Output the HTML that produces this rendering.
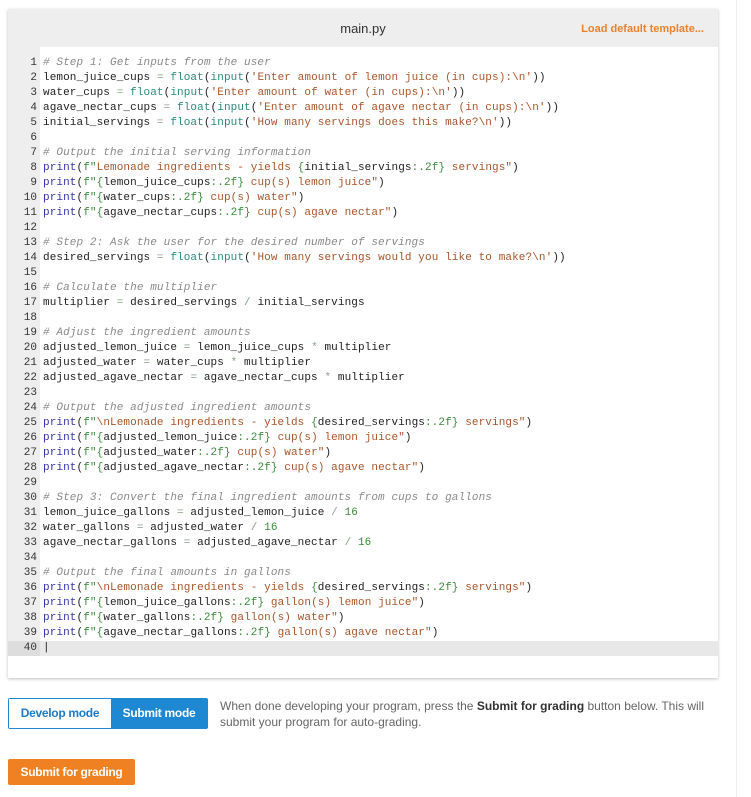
<!DOCTYPE html>
<html><head><meta charset="utf-8"><style>
body{margin:0;width:751px;height:797px;background:#fff;font-family:"Liberation Sans",sans-serif;position:relative;overflow:hidden}
.vline{position:absolute;left:736px;top:0;width:1px;height:797px;background:#eee}
.box{position:absolute;left:8px;top:9px;width:710px;height:669px;box-shadow:0 1px 3px rgba(0,0,0,.25);background:#fff}
.hdr{height:38px;background:#eeeeee;position:relative}
.hdr .t{position:absolute;left:0;right:0;text-align:center;top:12px;font-size:13px;color:#333}
.hdr .l{position:absolute;right:14px;top:14px;font-size:11px;font-weight:bold;color:#e8822f}
.gut{position:absolute;left:0;top:38px;width:32px;height:595px;background:#eeeeee}
.code{position:absolute;left:0;top:47px;width:710px;font-family:"Liberation Mono",monospace;font-size:11px;letter-spacing:0.1px;line-height:15px;color:#222}
.ln{display:block;height:15px;white-space:pre}
.n{display:inline-block;width:29px;padding-right:3px;text-align:right;color:#333;margin-right:3px;letter-spacing:0}
.cur{background:#e8e8e8}
.c{color:#8a8a8a;font-style:italic}.p{color:#3535a8}.b{color:#2b8a7e}.s{color:#a8562b}.g{color:#3d8a3d}.o{color:#8aa08a}
.btns{position:absolute;left:8px;top:698px;height:29px;border:1px solid #1e88d2;border-radius:2px;display:flex;font-size:12px;font-weight:bold;letter-spacing:-0.3px}
.btns div{line-height:29px;text-align:center}
.d{color:#1e7ac4;background:#fff;width:102px}.sm{color:#fff;background:#1e88d2;width:96px}
.desc{position:absolute;left:220px;top:698px;font-size:12px;line-height:16px;color:#666;width:490px}
.desc b{color:#333}
.sub{position:absolute;left:8px;top:759px;width:127px;height:26px;background:#ef8122;color:#fff;font-size:12px;font-weight:bold;text-align:center;line-height:26px;border-radius:2px;letter-spacing:-0.3px}
</style></head><body>
<div class="vline"></div>
<div class="box">
<div class="hdr"><div class="t">main.py</div><div class="l">Load default template...</div></div>
<div class="gut"></div>
<div class="code">
<span class="ln"><span class="n">1</span><span class="c"># Step 1: Get inputs from the user</span></span>
<span class="ln"><span class="n">2</span>lemon_juice_cups <span class="o">=</span> <span class="b">float</span>(<span class="b">input</span>(<span class="s">'Enter amount of lemon juice (in cups):\n'</span>))</span>
<span class="ln"><span class="n">3</span>water_cups <span class="o">=</span> <span class="b">float</span>(<span class="b">input</span>(<span class="s">'Enter amount of water (in cups):\n'</span>))</span>
<span class="ln"><span class="n">4</span>agave_nectar_cups <span class="o">=</span> <span class="b">float</span>(<span class="b">input</span>(<span class="s">'Enter amount of agave nectar (in cups):\n'</span>))</span>
<span class="ln"><span class="n">5</span>initial_servings <span class="o">=</span> <span class="b">float</span>(<span class="b">input</span>(<span class="s">'How many servings does this make?\n'</span>))</span>
<span class="ln"><span class="n">6</span></span>
<span class="ln"><span class="n">7</span><span class="c"># Output the initial serving information</span></span>
<span class="ln"><span class="n">8</span><span class="p">print</span>(<span class="g">f"</span><span class="s">Lemonade ingredients - yields </span><span class="g">{</span>initial_servings<span class="g">:.2f}</span><span class="s"> servings"</span>)</span>
<span class="ln"><span class="n">9</span><span class="p">print</span>(<span class="g">f"{</span>lemon_juice_cups<span class="g">:.2f}</span><span class="s"> cup(s) lemon juice"</span>)</span>
<span class="ln"><span class="n">10</span><span class="p">print</span>(<span class="g">f"{</span>water_cups<span class="g">:.2f}</span><span class="s"> cup(s) water"</span>)</span>
<span class="ln"><span class="n">11</span><span class="p">print</span>(<span class="g">f"{</span>agave_nectar_cups<span class="g">:.2f}</span><span class="s"> cup(s) agave nectar"</span>)</span>
<span class="ln"><span class="n">12</span></span>
<span class="ln"><span class="n">13</span><span class="c"># Step 2: Ask the user for the desired number of servings</span></span>
<span class="ln"><span class="n">14</span>desired_servings <span class="o">=</span> <span class="b">float</span>(<span class="b">input</span>(<span class="s">'How many servings would you like to make?\n'</span>))</span>
<span class="ln"><span class="n">15</span></span>
<span class="ln"><span class="n">16</span><span class="c"># Calculate the multiplier</span></span>
<span class="ln"><span class="n">17</span>multiplier <span class="o">=</span> desired_servings <span class="o">/</span> initial_servings</span>
<span class="ln"><span class="n">18</span></span>
<span class="ln"><span class="n">19</span><span class="c"># Adjust the ingredient amounts</span></span>
<span class="ln"><span class="n">20</span>adjusted_lemon_juice <span class="o">=</span> lemon_juice_cups <span class="o">*</span> multiplier</span>
<span class="ln"><span class="n">21</span>adjusted_water <span class="o">=</span> water_cups <span class="o">*</span> multiplier</span>
<span class="ln"><span class="n">22</span>adjusted_agave_nectar <span class="o">=</span> agave_nectar_cups <span class="o">*</span> multiplier</span>
<span class="ln"><span class="n">23</span></span>
<span class="ln"><span class="n">24</span><span class="c"># Output the adjusted ingredient amounts</span></span>
<span class="ln"><span class="n">25</span><span class="p">print</span>(<span class="g">f"</span><span class="s">\nLemonade ingredients - yields </span><span class="g">{</span>desired_servings<span class="g">:.2f}</span><span class="s"> servings"</span>)</span>
<span class="ln"><span class="n">26</span><span class="p">print</span>(<span class="g">f"{</span>adjusted_lemon_juice<span class="g">:.2f}</span><span class="s"> cup(s) lemon juice"</span>)</span>
<span class="ln"><span class="n">27</span><span class="p">print</span>(<span class="g">f"{</span>adjusted_water<span class="g">:.2f}</span><span class="s"> cup(s) water"</span>)</span>
<span class="ln"><span class="n">28</span><span class="p">print</span>(<span class="g">f"{</span>adjusted_agave_nectar<span class="g">:.2f}</span><span class="s"> cup(s) agave nectar"</span>)</span>
<span class="ln"><span class="n">29</span></span>
<span class="ln"><span class="n">30</span><span class="c"># Step 3: Convert the final ingredient amounts from cups to gallons</span></span>
<span class="ln"><span class="n">31</span>lemon_juice_gallons <span class="o">=</span> adjusted_lemon_juice <span class="o">/</span> <span class="g">16</span></span>
<span class="ln"><span class="n">32</span>water_gallons <span class="o">=</span> adjusted_water <span class="o">/</span> <span class="g">16</span></span>
<span class="ln"><span class="n">33</span>agave_nectar_gallons <span class="o">=</span> adjusted_agave_nectar <span class="o">/</span> <span class="g">16</span></span>
<span class="ln"><span class="n">34</span></span>
<span class="ln"><span class="n">35</span><span class="c"># Output the final amounts in gallons</span></span>
<span class="ln"><span class="n">36</span><span class="p">print</span>(<span class="g">f"</span><span class="s">\nLemonade ingredients - yields </span><span class="g">{</span>desired_servings<span class="g">:.2f}</span><span class="s"> servings"</span>)</span>
<span class="ln"><span class="n">37</span><span class="p">print</span>(<span class="g">f"{</span>lemon_juice_gallons<span class="g">:.2f}</span><span class="s"> gallon(s) lemon juice"</span>)</span>
<span class="ln"><span class="n">38</span><span class="p">print</span>(<span class="g">f"{</span>water_gallons<span class="g">:.2f}</span><span class="s"> gallon(s) water"</span>)</span>
<span class="ln"><span class="n">39</span><span class="p">print</span>(<span class="g">f"{</span>agave_nectar_gallons<span class="g">:.2f}</span><span class="s"> gallon(s) agave nectar"</span>)</span>
<span class="ln cur"><span class="n" style="background:#ddd">40</span>|</span>
</div>
</div>
<div class="btns"><div class="d">Develop mode</div><div class="sm">Submit mode</div></div>
<div class="desc">When done developing your program, press the <b>Submit for grading</b> button below. This will submit your program for auto-grading.</div>
<div class="sub">Submit for grading</div>
</body></html>
